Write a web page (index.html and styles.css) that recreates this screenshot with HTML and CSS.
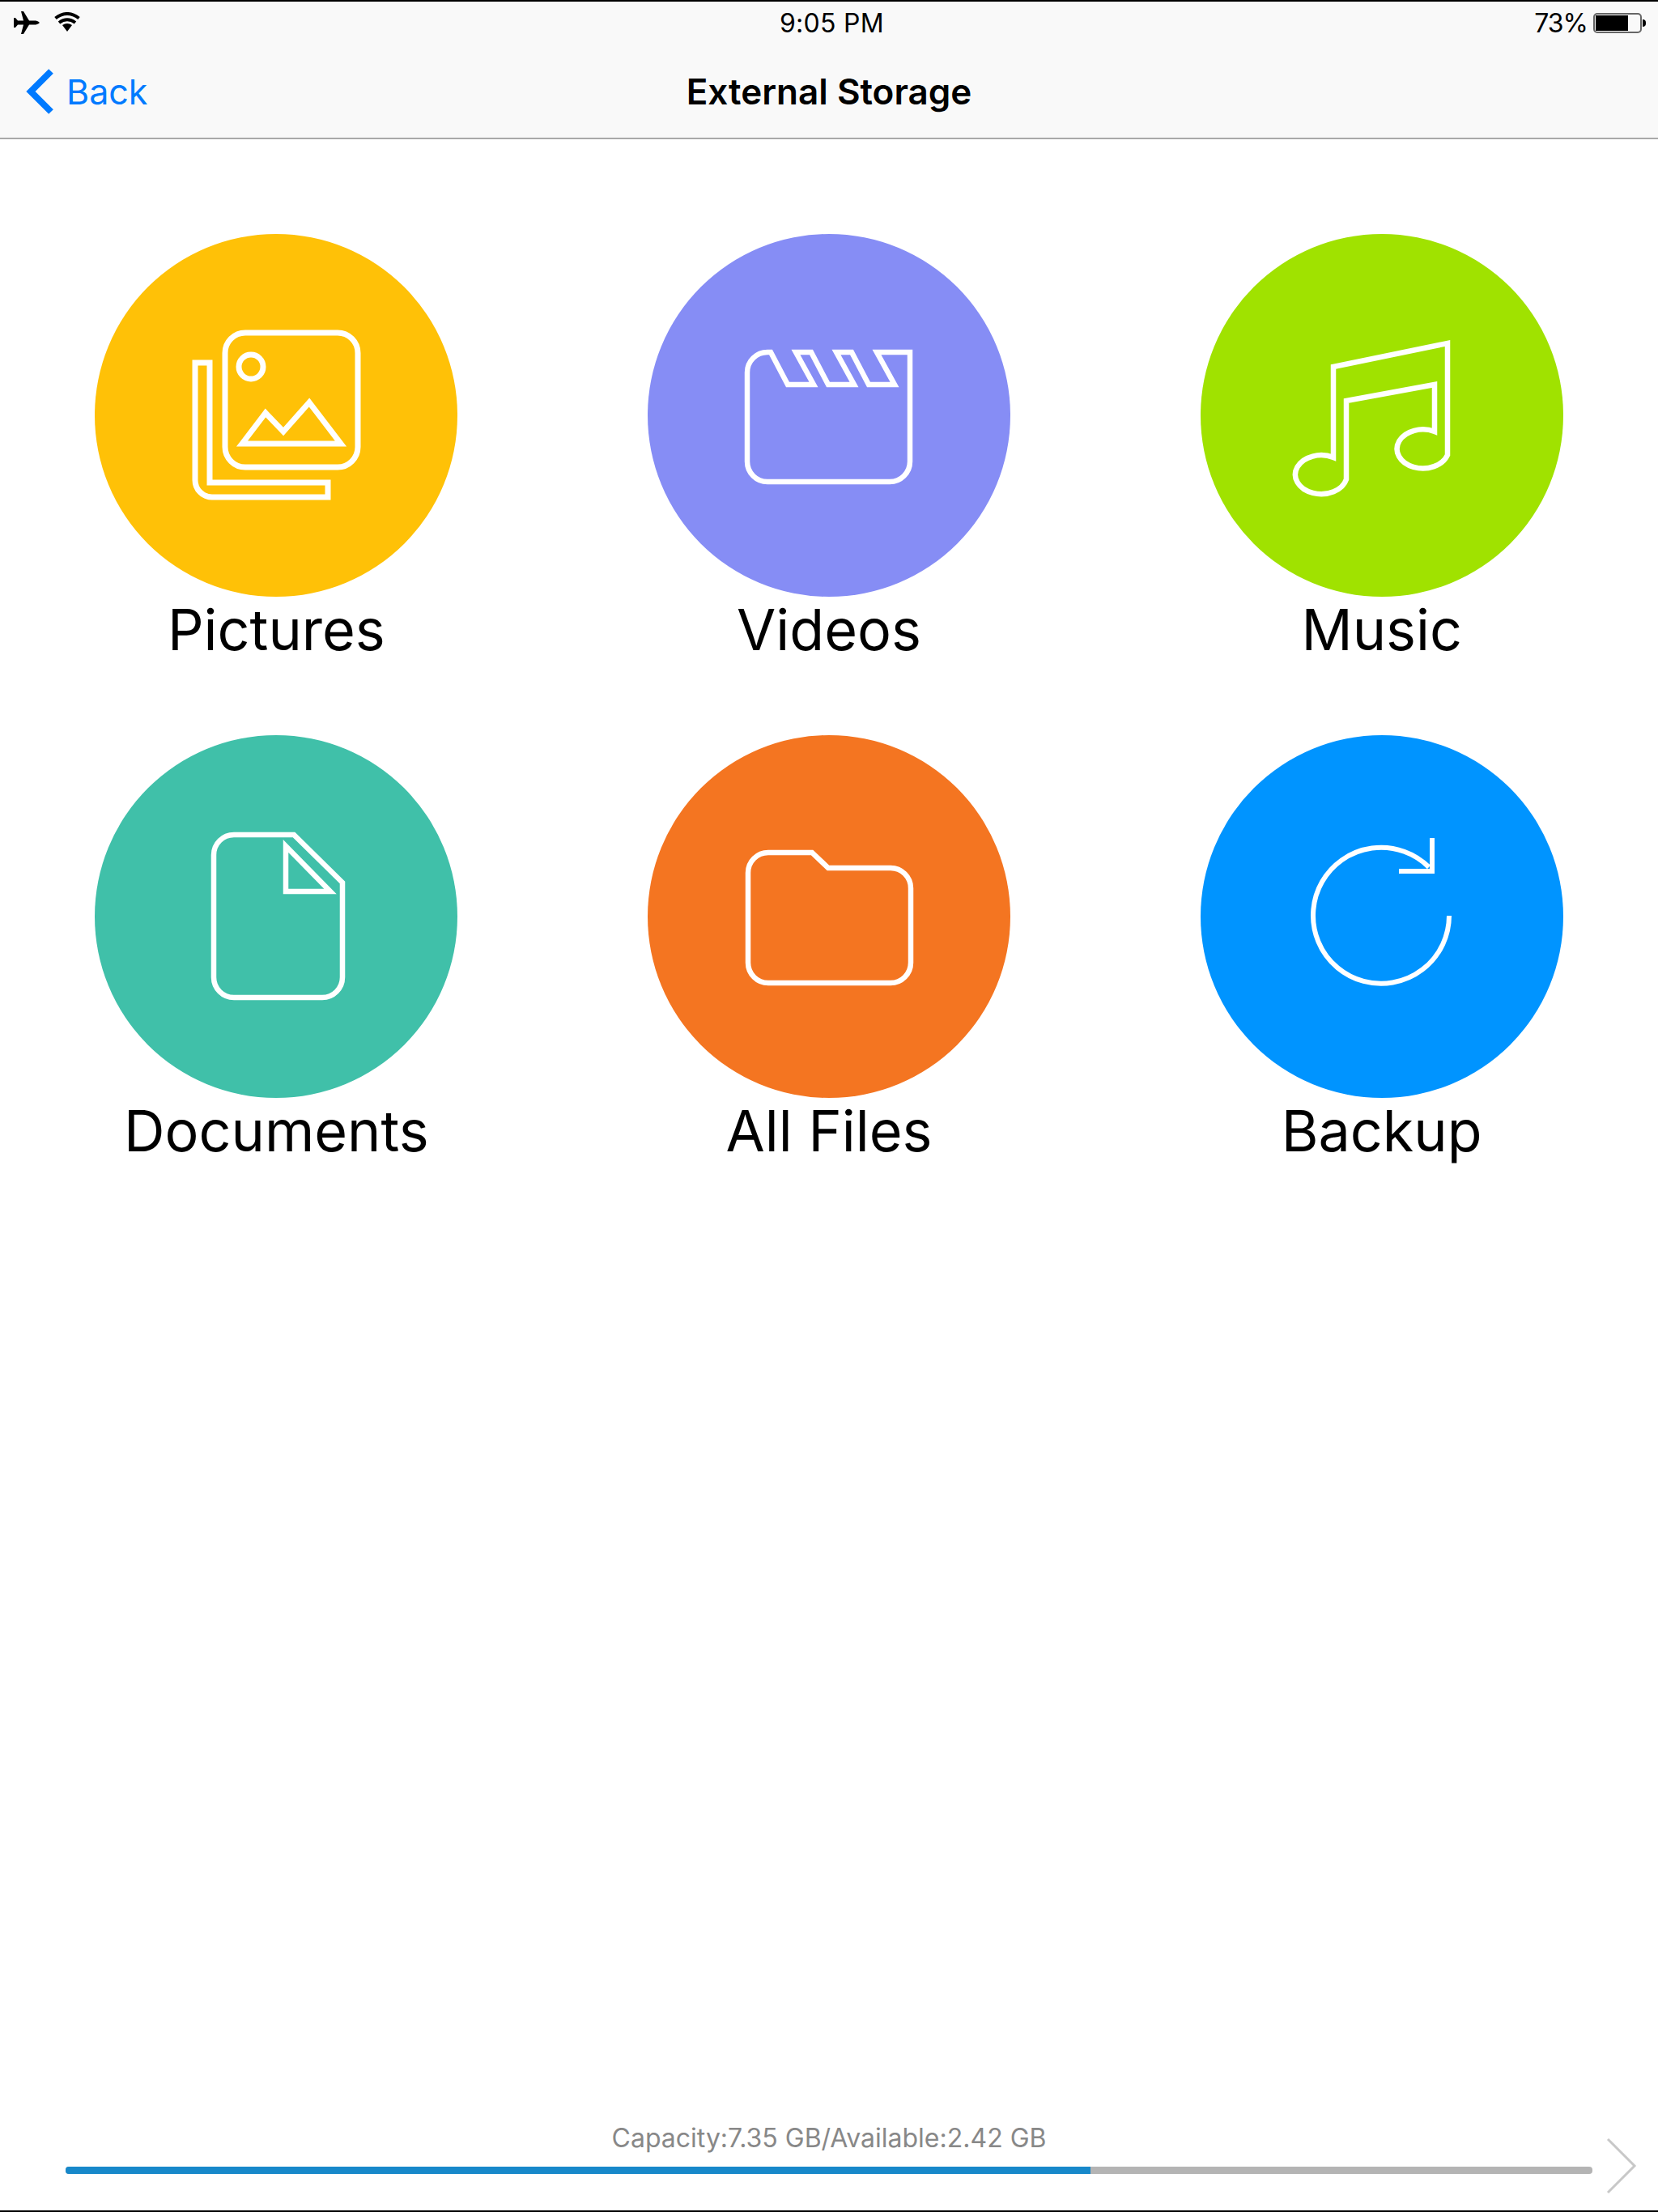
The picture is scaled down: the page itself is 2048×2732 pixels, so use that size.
FILE: index.html
```html
<!doctype html>
<html lang="en">
  <head>
    <title>External Storage</title>
    <meta name="viewport" content="width=device-width, initial-scale=1" />
    <link rel="stylesheet" href="styles.css">
  </head>
  <body>
    <div class="page">
      <header class="topbar">
        <div class="status">
          <div class="status-left">
            <svg class="plane" viewBox="0 0 32 28">
              <path d="M32 14c-2 2-4 2.500-7 2.500h-6L12 28H9l3-11.500H5L2 20H0V8h2l3 3.500h7L9 0h3l7 11.500h6c3 0 5 .5 7 2.500z" />
            </svg>
            <svg class="wifi" viewBox="0 0 32 24">
              <path class="wifi-arc" d="M1.500 7.500Q16-3.500 30.500 7.500M6 13Q16 5.500 26 13" />
              <path d="M16 24l-6-8q6-4 12 0z" />
            </svg>
          </div>
          <div class="time">9:05 PM</div>
          <div class="status-right">
            <span class="percent">73%</span>
            <span class="battery"><span class="battery-fill"></span></span>
            <span class="battery-nub"></span>
          </div>
        </div>
        <nav class="nav">
          <a class="back">
            <svg class="back-arrow" viewBox="0 0 36 56">
              <path d="M31 3L6 28l25 25" />
            </svg>
            Back
          </a>
          <h1 class="title">External Storage</h1>
          <span></span>
        </nav>
      </header>

      <main class="grid">
        <div class="tile">
          <div class="circle pictures">
            <svg class="icon" viewBox="117 289 448 448">
              <rect x="278" y="411" width="164" height="166" rx="25" />
              <circle cx="310" cy="453" r="15" />
              <path d="M299 548l29-38 22 23 32-36 39 51z" />
              <path d="M241 448h18v148h146v18H262a21 21 0 0 1-21-21z" />
            </svg>
          </div>
          <div class="label">Pictures</div>
        </div>
        <div class="tile">
          <div class="circle videos">
            <svg class="icon" viewBox="800 289 448 448">
              <path d="M1124 435v135a25 25 0 0 1-25 25H948a25 25 0 0 1-25-25V460a25 25 0 0 1 25-25h4l21 40h32l-22-40h19l21 40h32l-22-40h19l21 40h32l-22-40z" />
            </svg>
          </div>
          <div class="label">Videos</div>
        </div>
        <div class="tile">
          <div class="circle music">
            <svg class="icon" viewBox="1483 289 448 448">
              <path d="M1647 453l141-29v138a32 24 0 1 1-16-29v-58l-109 20v97a32 24 0 1 1-16-27z" />
            </svg>
          </div>
          <div class="label">Music</div>
        </div>
        <div class="tile">
          <div class="circle documents">
            <svg class="icon" viewBox="117 908 448 448">
              <path d="M289 1031h74l60 59v117a25 25 0 0 1-25 25H289a25 25 0 0 1-25-25V1056a25 25 0 0 1 25-25z" />
              <path d="M353 1045v56h55z" />
            </svg>
          </div>
          <div class="label">Documents</div>
        </div>
        <div class="tile">
          <div class="circle files">
            <svg class="icon" viewBox="800 908 448 448">
              <path d="M949 1053h54l20 19h77a25 25 0 0 1 25 25v92a25 25 0 0 1-25 25H949a25 25 0 0 1-25-25v-111a25 25 0 0 1 25-25z" />
            </svg>
          </div>
          <div class="label">All Files</div>
        </div>
        <div class="tile">
          <div class="circle backup">
            <svg class="icon" viewBox="1483 908 448 448">
              <path d="M1790 1131a84 84 0 1 1-25-60" />
              <path d="M1769 1035v41h-41" />
            </svg>
          </div>
          <div class="label">Backup</div>
        </div>
      </main>

      <footer class="storage">
        <div class="capacity">Capacity:7.35 GB/Available:2.42 GB</div>
        <div class="track"><div class="used" style="width: 67.1%"></div></div>
        <svg class="more" viewBox="0 0 38 70">
          <path d="M2 2l33 33L2 68" />
        </svg>
      </footer>
    </div>
  </body>
</html>
```

FILE: styles.css
```css
* {
  box-sizing: border-box;
}
body {
  margin: 0;
  background-color: #fff;
  font-family: Inter, "Liberation Sans", sans-serif;
  color: #000;
}
.page {
  display: flex;
  flex-direction: column;
  height: 2732px;
  border-top: 2px solid #000;
  border-bottom: 2px solid #000;
}

/* top bar */
.topbar {
  height: 170px;
  background-color: #f9f9f9;
  border-bottom: 2px solid #a9a9a9;
}
.status {
  display: grid;
  grid-template-columns: 1fr auto 1fr;
  align-items: center;
  height: 52px;
  padding: 0 15px 0 17px;
}
.status-left {
  display: flex;
  align-items: center;
  gap: 18px;
}
.plane {
  width: 32px;
  height: 28px;
}
.wifi {
  width: 32px;
  height: 24px;
  margin-bottom: 2px;
}
.wifi-arc {
  fill: none;
  stroke: #000;
  stroke-width: 4;
}
.time {
  font-size: 32px;
  letter-spacing: 0.3px;
  padding-left: 5px;
}
.status-right {
  display: flex;
  align-items: center;
  justify-content: flex-end;
}
.percent {
  font-size: 32px;
  letter-spacing: -1px;
  margin-right: 7px;
}
.battery {
  display: block;
  width: 60px;
  height: 25px;
  padding: 1px;
  border: 2px solid #666;
  border-radius: 5px;
}
.battery-fill {
  display: block;
  width: 40px;
  height: 100%;
  background-color: #000;
}
.battery-nub {
  width: 4px;
  height: 9px;
  margin-left: 1px;
  background-color: #000;
  border-radius: 0 4px 4px 0;
}
.nav {
  display: grid;
  grid-template-columns: 1fr auto 1fr;
  align-items: center;
  height: 112px;
  padding-top: 6px;
}
.back {
  display: flex;
  align-items: center;
  gap: 14px;
  margin-left: 32px;
  font-size: 43px;
  color: #007aff;
}
.back-arrow {
  width: 36px;
  height: 56px;
  fill: none;
  stroke: #007aff;
  stroke-width: 8;
}
.title {
  margin: 0;
  font-size: 44px;
  font-weight: 600;
}

/* category tiles */
.grid {
  display: grid;
  grid-template-columns: repeat(3, 1fr);
  row-gap: 89px;
  padding-top: 117px;
}
.tile {
  display: flex;
  flex-direction: column;
  align-items: center;
}
.circle {
  width: 448px;
  height: 448px;
  border-radius: 50%;
}
.pictures {
  background-color: #ffc107;
  stroke-width: 7;
}
.videos {
  background-color: #868df5;
}
.music {
  background-color: #a0e200;
}
.documents {
  background-color: #40c0a9;
}
.files {
  background-color: #f47521;
}
.backup {
  background-color: #0094ff;
  stroke-width: 6;
}
.icon {
  display: block;
  width: 448px;
  height: 448px;
  fill: none;
  stroke: #fff;
}
.label {
  font-size: 70px;
  line-height: 82px;
}
.videos,
.music,
.documents,
.files {
  stroke-width: 6.5;
}

/* storage bar */
.storage {
  display: grid;
  grid-template-columns: 81px 1886px 81px;
  margin-top: auto;
  padding-bottom: 45px;
}
.capacity {
  grid-column: 2;
  grid-row: 1;
  text-align: center;
  font-size: 32px;
  line-height: 34px;
  padding-bottom: 18px;
  color: #888;
}
.track {
  grid-column: 2;
  grid-row: 2;
  height: 9px;
  background-color: #b4b4b4;
  border-radius: 4px;
  overflow: hidden;
}
.used {
  height: 100%;
  background-color: #1788ca;
}
.more {
  grid-column: 3;
  grid-row: 1 / span 2;
  align-self: end;
  width: 38px;
  height: 70px;
  margin: 0 0 -25px 17px;
  fill: none;
  stroke: #c8c8c8;
  stroke-width: 3;
}
```
